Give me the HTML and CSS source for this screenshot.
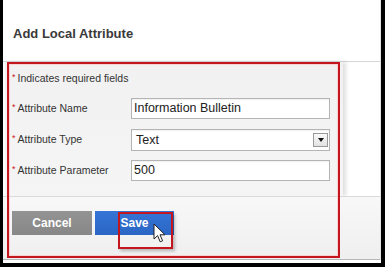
FILE: index.html
```html
<!DOCTYPE html>
<html>
<head>
<meta charset="utf-8">
<link rel="stylesheet" href="styles.css">
</head>
<body>
<div class="frame">
  <div class="dialog">
    <div class="header"><h1 class="title">Add Local Attribute</h1></div>
    <div class="body">
      <div class="panel">
        <div class="note"><span class="req">*</span>Indicates required fields</div>
        <div class="row">
          <label class="label"><span class="req">*</span>Attribute Name</label>
          <div class="field">Information Bulletin</div>
        </div>
        <div class="row">
          <label class="label"><span class="req">*</span>Attribute Type</label>
          <div class="field select">Text<span class="drop"><svg width="6" height="4" viewBox="0 0 6 4"><path d="M0 0H6L3 4Z" fill="#111"/></svg></span></div>
        </div>
        <div class="row">
          <label class="label"><span class="req">*</span>Attribute Parameter</label>
          <div class="field">500</div>
        </div>
      </div>
    </div>
    <div class="footer">
      <button class="btn cancel">Cancel</button>
      <button class="btn save">Save</button>
    </div>
  </div>
  <div class="hl hl-form"></div>
  <div class="hl hl-save"></div>
  <svg class="cursor" width="13" height="21" viewBox="0 0 13 21"><path d="M1 1V16L4.6 12.6L7.2 18.8L9.6 17.8L7 11.8H12Z" fill="#fff" stroke="#222" stroke-width="1" stroke-linejoin="round"/></svg>
</div>
</body>
</html>
```
FILE: styles.css
```css
* { box-sizing: border-box; }
html, body { margin: 0; padding: 0; background: #fff; }
body { font-family: "Liberation Sans", Arial, sans-serif; color: #333; }
.frame {
  position: relative;
  width: 385px;
  height: 267px;
  border-left: 3px solid #000;
  border-right: 4px solid #000;
  border-bottom: 4px solid #000;
  background: #fff;
}
.dialog {
  height: 260px;
  border-right: 1px solid #e2e2e2;
  display: flex;
  flex-direction: column;
}
.header {
  height: 62px;
  padding: 26px 0 0 10px;
  border-bottom: 1px solid #d6d6d6;
}
.title {
  margin: 0;
  font-size: 13px;
  line-height: 16px;
  font-weight: bold;
  color: #3a3a3a;
}
.body {
  height: 134px;
  background: #fff;
}
.panel {
  margin-left: 2px;
  width: 338px;
  height: 134px;
  background: linear-gradient(#f1f1f1, #f5f5f5);
  box-shadow: 3px 0 4px rgba(0,0,0,0.13);
  padding: 8px 12px 0 7px;
}
.note {
  font-size: 10.5px;
  line-height: 14px;
  color: #333;
  margin-bottom: 13px;
}
.req {
  color: #d02020;
  font-size: 9px;
  vertical-align: 2px;
  margin-right: 2px;
}
.row {
  display: flex;
  align-items: flex-start;
  height: 21px;
  margin-bottom: 10px;
}
.label {
  width: 119px;
  font-size: 10.5px;
  line-height: 14px;
  padding-top: 2px;
  color: #333;
}
.field {
  width: 199px;
  height: 21px;
  border: 1px solid #b4b4b4;
  background: #fff;
  font-size: 12.5px;
  line-height: 19px;
  padding-left: 2px;
  color: #222;
  box-shadow: inset 0 1px 1px rgba(0,0,0,0.06);
}
.select {
  height: 22px;
  margin-top: 0;
  padding-left: 4px;
  display: flex;
  align-items: center;
  justify-content: space-between;
  padding-right: 1px;
  line-height: 20px;
}
.drop {
  width: 15px;
  height: 14px;
  border: 1px solid #9a9a9a;
  background: linear-gradient(#fafafa, #e2e2e2);
  display: flex;
  align-items: center;
  justify-content: center;
}
.footer {
  height: 64px;
  border-top: 1px solid #dadada;
  border-bottom: 1px solid #b8b8b8;
  background: linear-gradient(#f8f8f8, #efefef);
  padding: 14px 0 0 9px;
  display: flex;
  align-items: flex-start;
  gap: 3px;
}
.btn {
  height: 24px;
  border: none;
  padding: 0;
  font-family: "Liberation Sans", Arial, sans-serif;
  font-size: 12px;
  font-weight: bold;
  color: #fff;
}
.cancel { width: 80px; background: linear-gradient(#939393, #878787); }
.save { width: 79px; background: linear-gradient(#3575d6, #2a66c4); }
.hl {
  position: absolute;
  border: 2px solid #c3161f;
}
.hl-form {
  left: 4px;
  top: 62px;
  width: 333px;
  height: 196px;
  box-shadow: inset 0 0 0 1px rgba(255,180,180,0.5);
}
.hl-save {
  left: 115px;
  top: 212px;
  width: 55px;
  height: 37px;
  box-shadow: 2px 2px 3px rgba(0,0,0,0.25);
}
.cursor {
  position: absolute;
  left: 150px;
  top: 223px;
}
```
